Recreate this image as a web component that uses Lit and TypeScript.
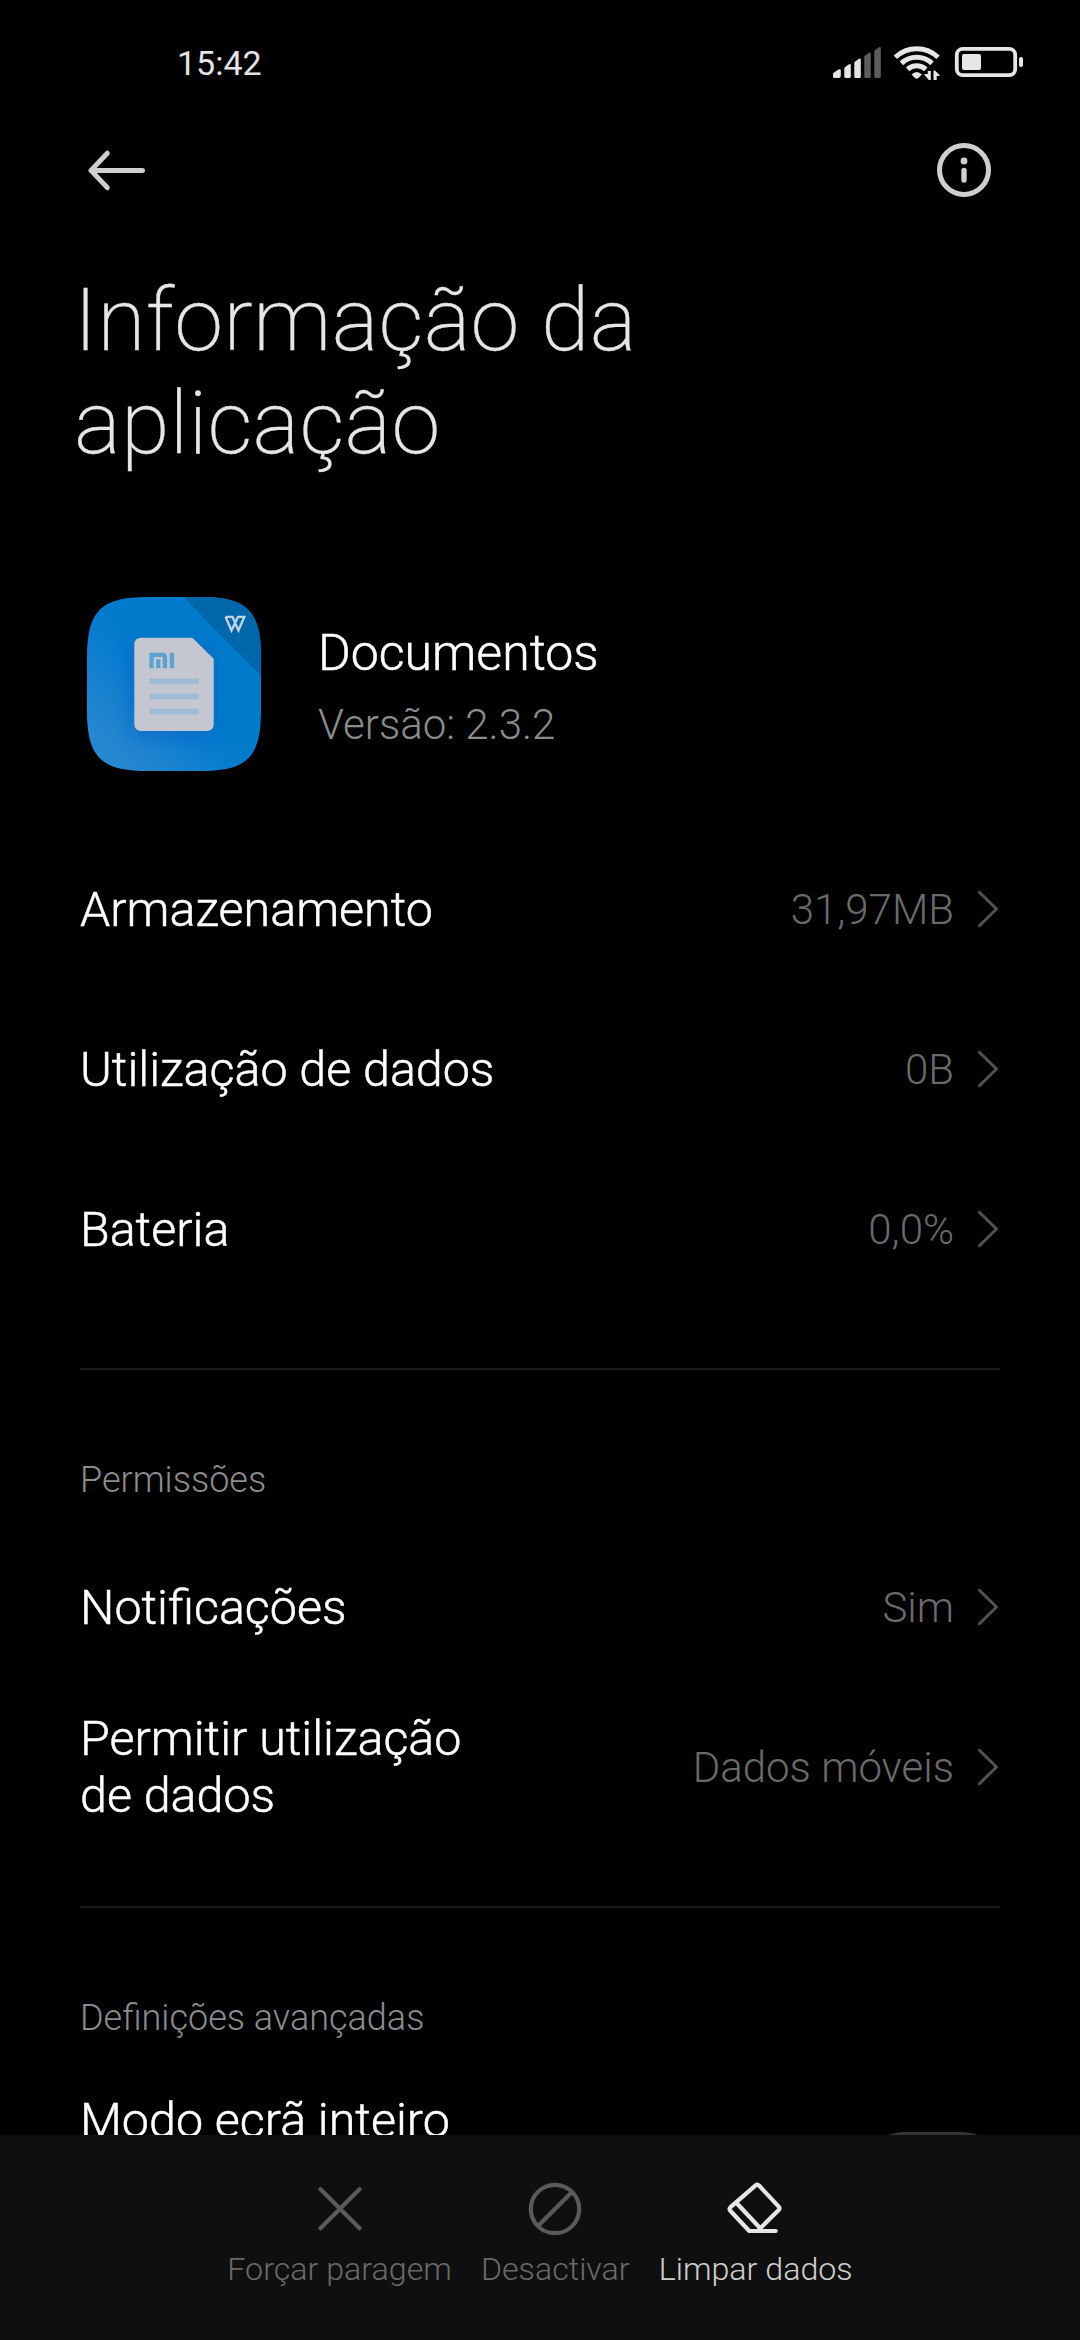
import { LitElement, html, css, svg } from "lit";
import { customElement, property } from "lit/decorators.js";

@customElement("status-bar")
class StatusBar extends LitElement {
  static styles = css`
    :host { display: flex; justify-content: space-between; align-items: center; height: 124px; padding: 0 56px 0 177px; box-sizing: border-box; }
    .time { padding-top: 2px; font-size: 34px; line-height: 40px; color: #e4e4e4; }
    svg { display: block; width: 192px; height: 36px; }
  `;
  render() {
    return html`
      <span class="time">15:42</span>
      <svg viewBox="832 44 192 36">
        <g fill="#e6e6e6">
          <path d="M833 76.500V74q0-1 1-1.500l4.500-3q2.300-.8 2.300 1V76q0 2-2 2h-4.300q-1.500 0-1.500-1.500z" />
          <path d="M844.300 76.500V68.500q0-1 .8-1.500l4-2.800q1.700-.7 1.700 1V76.500q0 1.500-1.500 1.500h-3.500q-1.500 0-1.500-1.500z" />
          <path d="M854.300 76.500V63q0-1 .8-1.500l4-2.800q1.700-.7 1.700 1V76.500q0 1.500-1.500 1.500h-3.500q-1.500 0-1.500-1.500z" />
        </g>
        <g fill="#5c5c5c">
          <path d="M864.300 76.500V57q0-1 .8-1.500l4-2.800q1.700-.7 1.700 1V76.500q0 1.500-1.500 1.500h-3.500q-1.500 0-1.500-1.500z" />
          <path d="M874.300 76.500V51.500q0-1 .8-1.500l4-2.800q1.700-.7 1.700 1V76.500q0 1.500-1.500 1.500h-3.500q-1.500 0-1.500-1.500z" />
        </g>
        <g fill="none" stroke="#e6e6e6" stroke-width="5">
          <path d="M895.300 57.200a31 31 0 0 1 42.800 0" />
          <path d="M901.400 63.300a22.500 22.500 0 0 1 30.600 0" />
          <path d="M907.600 69.400a13.500 13.500 0 0 1 18.200 0" />
        </g>
        <path d="M911.500 74.500q5.200-5 10.400 0l-3.500 3.600q-1.700 1.500-3.400 0z" fill="#e6e6e6" />
        <path d="M927.800 71h3v9.500h-1.500l-4.800-5.500v-1h3.300zM933.500 80v-9.500h1.500l4.500 4.500v1h-2.800v4z" fill="#e6e6e6" />
        <rect x="956.800" y="48.800" width="58.400" height="26.400" rx="6" fill="none" stroke="#e6e6e6" stroke-width="3.800" />
        <rect x="962" y="54" width="19" height="16" rx="2" fill="#e6e6e6" />
        <rect x="1019" y="57" width="4" height="10" rx="2" fill="#e6e6e6" />
      </svg>
    `;
  }
}

@customElement("setting-row")
class SettingRow extends LitElement {
  @property() label = "";
  @property() value = "";
  static styles = css`
    :host { display: flex; align-items: center; height: 160px; padding: 0 80px; }
    .label { flex: none; width: 420px; font-size: 48.4px; line-height: 57px; color: #fff; font-weight: 300; -webkit-text-stroke: 0.5px #fff; }
    .value { flex: 1; padding-top: 1px; text-align: right; font-size: 42px; line-height: 50px; color: #6a6a6a; font-weight: 300; }
    svg { flex: none; width: 24px; height: 40px; margin: -1px 0 0 22px; display: block; }
  `;
  render() {
    return html`
      <span class="label">${this.label}</span>
      <span class="value">${this.value}</span>
      <svg viewBox="0 0 24 40"><path d="M3.400 3.300L20.500 20L3.400 36.700" fill="none" stroke="#525252" stroke-width="3" stroke-linecap="round" stroke-linejoin="round" /></svg>
    `;
  }
}

const crossIcon = svg`<path d="M11.500 11.200L50.500 50.200M50.500 11.200L11.500 50.200" />`;
const banIcon = svg`<circle cx="31" cy="31" r="24.200" /><path d="M14.500 47.500L47.500 14.500" />`;
const eraserIcon = svg`<path d="M50.700 53H24.300L5.500 33q-1.800-2 0-3.800L30.600 7.300q1.700-1.500 3.400.2L53.700 28.600q1.500 1.800 0 3.500L34 51.500M12 25.500L35.500 50.500" />`;

@customElement("app-root")
class AppRoot extends LitElement {
  static styles = css`
    :host { display: flex; flex-direction: column; width: 1080px; height: 2340px; background: #000; font-family: Roboto, "Liberation Sans", sans-serif; overflow: hidden; }
    .nav { display: flex; justify-content: space-between; align-items: center; height: 92px; padding: 0 86px; }
    .nav svg { display: block; width: 60px; height: 60px; }
    h1 { margin: 52px 0 0; padding: 0 74px; font-size: 88px; line-height: 103px; font-weight: 200; letter-spacing: 0.2px; color: #e6e6e6; -webkit-text-stroke: 0.3px #e6e6e6; }
    .app { display: flex; align-items: center; gap: 56px; height: 176px; padding: 0 86px; margin-top: 122px; }
    .app svg { display: block; width: 176px; height: 176px; }
    .about { padding-top: 5px; }
    .name { font-size: 50px; line-height: 60px; color: #fff; font-weight: 300; -webkit-text-stroke: 0.5px #fff; }
    .version { margin-top: 17px; font-size: 42px; line-height: 50px; color: #8c8c8c; font-weight: 300; }
    .usage { margin-top: 57px; }
    .line { height: 2px; margin: 59px 80px 0; background: #1a1a1a; }
    .section { padding: 0 80px; margin-top: 88px; font-size: 36px; line-height: 44px; color: #8c8c8c; font-weight: 300; }
    .perms { margin-top: 25px; }
    .scroll { flex: 1; min-height: 0; overflow: hidden; }
    .mode { display: flex; justify-content: space-between; padding: 0 80px; margin-top: 52px; }
    .modelabel { font-size: 48.4px; line-height: 57px; color: #fff; font-weight: 300; -webkit-text-stroke: 0.5px #fff; }
    .switch { width: 134px; height: 74px; border-radius: 37px; background: #333; margin-top: 40px; }
    .bar { flex: none; display: flex; justify-content: center; gap: 29px; height: 205px; background: #0f0f0f; }
    .action { display: flex; flex-direction: column; align-items: center; padding-top: 43px; font-size: 32.200px; color: #6a6a6a; font-weight: 300; }
    .action svg { display: block; width: 62px; height: 62px; fill: none; stroke: #5a5a5a; stroke-width: 4.200; stroke-linecap: round; stroke-linejoin: round; }
    .action span { margin-top: 9px; line-height: 40px; }
    .action.on { color: #cfcfcf; }
    .action.on svg { stroke: #e6e6e6; }
  `;
  render() {
    return html`
      <status-bar></status-bar>
      <div class="nav">
        <svg viewBox="0 0 60 60"><path d="M56.500 30.400H5M21.300 13.200L5 30.400L21.300 47.600" fill="none" stroke="#cfcfcf" stroke-width="5" stroke-linecap="round" stroke-linejoin="round" /></svg>
        <svg viewBox="0 0 60 60"><circle cx="30" cy="30" r="24.500" fill="none" stroke="#cfcfcf" stroke-width="5" /><circle cx="30" cy="21" r="3.400" fill="#cfcfcf" /><path d="M30 30.500V40" stroke="#cfcfcf" stroke-width="5.400" stroke-linecap="round" /></svg>
      </div>
      <div class="scroll">
        <h1>Informação da<br />aplicação</h1>
        <div class="app">
          <svg viewBox="-1 -1 176 176">
            <defs>
              <linearGradient id="g" x1="0" y1="1" x2="1" y2="0"><stop offset="0" stop-color="#2a8bd0" /><stop offset=".2" stop-color="#2085d0" /><stop offset=".4" stop-color="#0a7cd0" /><stop offset=".55" stop-color="#007acb" /></linearGradient>
              <clipPath id="c"><path d="M0 60C0 14 14 0 60 0H114C160 0 174 14 174 60V114C174 160 160 174 114 174H60C14 174 0 160 0 114z" /></clipPath>
              <filter id="b" x="-30%" y="-30%" width="160%" height="160%"><feGaussianBlur stdDeviation="8" /></filter>
            </defs>
            <g clip-path="url(#c)">
              <rect width="174" height="174" fill="url(#g)" />
              <rect x="44" y="50" width="82" height="90" rx="8" fill="#0b66c2" opacity=".7" filter="url(#b)" />
              <path d="M96.300 0H174V79z" fill="#0067ab" />
            </g>
            <path d="M54.500 40.700H105.300L126.700 61.700V126.800q0 7.200-7.200 7.200H54.500q-7.200 0-7.200-7.200V47.900q0-7.200 7.200-7.200z" fill="#c4c7d0" />
            <path d="M64.500 71.300V57.800H75.500q2.400 0 2.400 2.400V71.300M71.200 62.300V71.300M84.900 55.700V71.300" fill="none" stroke="#5ba2d3" stroke-width="4.300" />
            <path d="M62.300 84.300H111.700M62.300 99.300H111.700M62.300 114.700H111.700" stroke="#a0bbd5" stroke-width="5.800" />
            <path d="M138.500 19.800H145.500L148.500 26.500M138.500 19.800L144.500 33.500L151 19.800H157.300L151.500 33.500L148.300 26.500" fill="none" stroke="#c3d3e4" stroke-width="2.300" />
          </svg>
          <div class="about"><div class="name">Documentos</div><div class="version">Versão: 2.3.2</div></div>
        </div>
        <div class="usage">
          <setting-row label="Armazenamento" value="31,97MB"></setting-row>
          <setting-row label="Utilização de dados" value="0B"></setting-row>
          <setting-row label="Bateria" value="0,0%"></setting-row>
        </div>
        <div class="line"></div>
        <div class="section">Permissões</div>
        <div class="perms">
          <setting-row label="Notificações" value="Sim"></setting-row>
          <setting-row label="Permitir utilização de dados" value="Dados móveis"></setting-row>
        </div>
        <div class="line"></div>
        <div class="section">Definições avançadas</div>
        <div class="mode"><span class="modelabel">Modo ecrã inteiro</span><div class="switch"></div></div>
      </div>
      <div class="bar">
        <div class="action"><svg viewBox="0 0 62 62">${crossIcon}</svg><span>Forçar paragem</span></div>
        <div class="action"><svg viewBox="0 0 62 62">${banIcon}</svg><span>Desactivar</span></div>
        <div class="action on"><svg viewBox="0 0 62 62">${eraserIcon}</svg><span>Limpar dados</span></div>
      </div>
    `;
  }
}
